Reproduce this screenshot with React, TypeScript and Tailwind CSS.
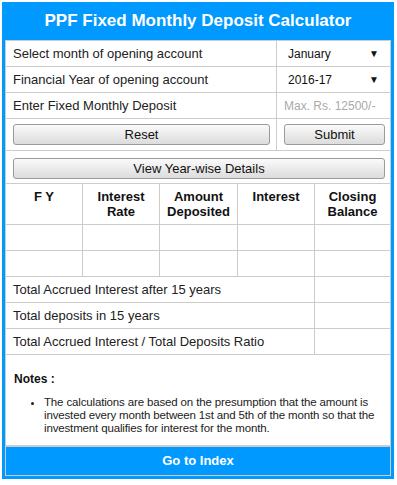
const cell = "border-[#ccc]";

const Btn = ({ label, className = "" }: { label: string; className?: string }) => (
  <button
    className={`h-[21px] rounded-[3px] border border-[#9a9a9a] bg-gradient-to-b from-[#fafafa] to-[#dcdcdc] text-[13px] leading-none text-[#111] ${className}`}
  >
    {label}
  </button>
);

const SelectBox = ({ value }: { value: string }) => (
  <div className="flex items-center justify-between pl-[11px] pr-[11px] text-[12px] text-[#111]">
    <span>{value}</span>
    <span className="text-[10px]">▼</span>
  </div>
);

export default function App() {
  const rows = ["", ""];
  return (
    <div className="ml-[2px] mt-[2px] w-[392px] bg-[#0099ff] px-[3px] pb-[3px] font-['Liberation_Sans',Arial,sans-serif]">
      <div className="flex h-[38px] items-center justify-center text-[17px] font-bold text-white">
        PPF Fixed Monthly Deposit Calculator
      </div>
      <div className={`border ${cell} bg-white`}>
        <div className={`grid h-[26px] grid-cols-[271px_1fr] border-b ${cell}`}>
          <div className={`flex items-center border-r ${cell} pl-[7px] text-[13px] text-[#222]`}>
            Select month of opening account
          </div>
          <SelectBox value="January" />
        </div>
        <div className={`grid h-[26px] grid-cols-[271px_1fr] border-b ${cell}`}>
          <div className={`flex items-center border-r ${cell} pl-[7px] text-[13px] text-[#222]`}>
            Financial Year of opening account
          </div>
          <SelectBox value="2016-17" />
        </div>
        <div className={`grid h-[26px] grid-cols-[271px_1fr] border-b ${cell}`}>
          <div className={`flex items-center border-r ${cell} pl-[7px] text-[13px] text-[#222]`}>
            Enter Fixed Monthly Deposit
          </div>
          <div className="flex items-center pl-[7px] text-[12px] text-[#aaa]">Max. Rs. 12500/-</div>
        </div>
        <div className={`grid h-[32px] grid-cols-[271px_1fr] border-b ${cell}`}>
          <div className={`flex items-start border-r ${cell} pl-[7px] pr-[6px] pt-[5px]`}>
            <Btn label="Reset" className="w-full" />
          </div>
          <div className="flex items-start pl-[7px] pr-[5px] pt-[5px]">
            <Btn label="Submit" className="w-full" />
          </div>
        </div>
        <div className={`h-[33px] border-b ${cell} px-[7px] pr-[5px] pt-[5px]`}>
          <Btn label="View Year-wise Details" className="w-full" />
        </div>
        <div className={`grid h-[41px] grid-cols-[77px_77px_78px_77px_1fr] border-b ${cell} text-center text-[13px] font-bold leading-[15px] text-[#111]`}>
          <div className={`border-r ${cell} pt-[5px]`}>F Y</div>
          <div className={`border-r ${cell} pt-[5px]`}>Interest<br />Rate</div>
          <div className={`border-r ${cell} pt-[5px]`}>Amount<br />Deposited</div>
          <div className={`border-r ${cell} pt-[5px]`}>Interest</div>
          <div className="pt-[5px]">Closing<br />Balance</div>
        </div>
        {rows.map((_, i) => (
          <div key={i} className={`grid h-[26px] grid-cols-[77px_77px_78px_77px_1fr] border-b ${cell}`}>
            <div className={`border-r ${cell}`} />
            <div className={`border-r ${cell}`} />
            <div className={`border-r ${cell}`} />
            <div className={`border-r ${cell}`} />
            <div />
          </div>
        ))}
        {[
          "Total Accrued Interest after 15 years",
          "Total deposits in 15 years",
          "Total Accrued Interest / Total Deposits Ratio",
        ].map((t) => (
          <div key={t} className={`grid h-[26px] grid-cols-[309px_1fr] border-b ${cell}`}>
            <div className={`flex items-center border-r ${cell} pl-[7px] text-[13px] text-[#222]`}>{t}</div>
            <div />
          </div>
        ))}
        <div className="h-[90px] pl-[8px] pr-[4px] pt-[15px] text-[12px] text-[#222]">
          <div className="font-bold text-[#111]">Notes :</div>
          <ul className="mt-[8px] list-disc pl-[30px] text-[11.5px] leading-[13px] tracking-[-0.15px]">
            <li>
              The calculations are based on the presumption that the amount is invested every month between 1st and 5th of the month so that the investment qualifies for interest for the month.
            </li>
          </ul>
        </div>
        <div className={`flex h-[30px] items-center justify-center border-t-2 ${cell} bg-[#0099ff] text-[13px] font-bold text-white`}>
          Go to Index
        </div>
      </div>
    </div>
  );
}
